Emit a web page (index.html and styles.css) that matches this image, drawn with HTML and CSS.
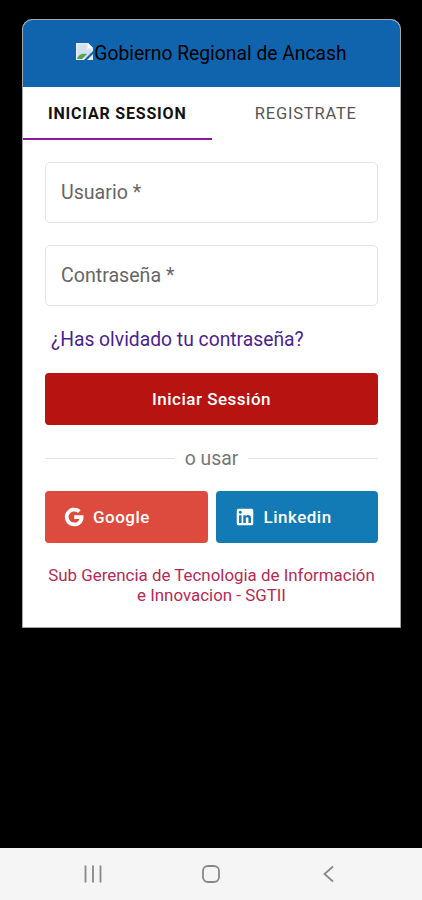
FILE: index.html
```html
<!DOCTYPE html>
<html lang="es">
<head>
    <meta charset="UTF-8">
    <meta name="viewport" content="width=device-width, initial-scale=1.0">
    <title>Gobierno Regional de Ancash</title>
    <link rel="stylesheet" href="styles.css">
</head>
<body>

    <main>
        <div class="card">
            <header class="card-header">
                <svg class="logo" viewBox="0 0 18 18">
                    <path d="M0 0h12l5 5v12H0z" fill="#e4ebf4"/>
                    <path d="M1.500 1.500h9v5h5v4l-5 5h-9z" fill="#d3e0f2"/>
                    <path d="M1 16c1-4 5-6 10-5l-5 5z" fill="#57a447"/>
                    <path d="M12 0v5h5z" fill="#fff"/>
                    <path d="M17 8v3l-6 6H8z" fill="#1064ae"/>
                </svg>
                <span class="logo-text">Gobierno Regional de Ancash</span>
            </header>

            <nav class="tabs">
                <a class="tab active">INICIAR SESSION</a>
                <a class="tab">REGISTRATE</a>
            </nav>

            <form class="login-form">
                <label class="field">Usuario *</label>
                <label class="field">Contraseña *</label>

                <a class="forgot">¿Has olvidado tu contraseña?</a>

                <button type="button" class="btn btn-login">Iniciar Sessión</button>

                <div class="divider"><span>o usar</span></div>

                <div class="social">
                    <button type="button" class="btn btn-google">
                        <svg class="icon" viewBox="0 0 24 24"><path fill="#fff" d="M12.200 10.100v4h5.600c-.6 2.400-2.500 4-5.600 4a6.100 6.100 0 1 1 4.100-10.600l2.900-2.900A10.200 10.200 0 1 0 12.200 22.200c6.200 0 10.200-4.200 10.200-10.200 0-.7-.1-1.300-.2-1.900z"/></svg>
                        <span>Google</span>
                    </button>
                    <button type="button" class="btn btn-linkedin">
                        <svg class="icon" viewBox="0 0 24 24"><path fill="#fff" d="M19 3a2 2 0 0 1 2 2v14a2 2 0 0 1-2 2H5a2 2 0 0 1-2-2V5a2 2 0 0 1 2-2h14m-.5 15.500v-5.300a3.260 3.260 0 0 0-3.260-3.260c-.85 0-1.840.52-2.320 1.300v-1.110h-2.790v8.370h2.790v-4.930c0-.77.620-1.400 1.390-1.400a1.400 1.400 0 0 1 1.400 1.400v4.930h2.790M6.880 8.560a1.680 1.680 0 0 0 1.680-1.680c0-.93-.75-1.690-1.680-1.690a1.690 1.690 0 0 0-1.690 1.690c0 .93.760 1.680 1.690 1.680m1.390 9.940v-8.370H5.500v8.370h2.770z"/></svg>
                        <span>Linkedin</span>
                    </button>
                </div>

                <p class="credits">Sub Gerencia de Tecnologia de Información<br>e Innovacion - SGTII</p>
            </form>
        </div>
    </main>

    <footer class="navbar">
        <svg viewBox="0 0 20 20"><path d="M2.500 1.500v17M10 1.500v17M17.500 1.500v17"/></svg>
        <svg viewBox="0 0 20 20"><rect x="2" y="2" width="16" height="16" rx="5"/></svg>
        <svg viewBox="0 0 20 20"><path d="M14 2.500L5.500 10l8.500 7.500"/></svg>
    </footer>

</body>
</html>
```
FILE: styles.css
```css
/* General Styles */
* {
    box-sizing: border-box;
}
body {
    font-family: Roboto, "Liberation Sans", sans-serif;
    background-color: #000;
    color: #000;
    margin: 0;
    height: 900px;
    display: flex;
    flex-direction: column;
    overflow: hidden;
}
main {
    flex: 1;
    padding: 19px 21px 0 22px;
}
.card {
    height: 609px;
    background: #fff;
    border: 1px solid #a3a7aa;
    border-radius: 10px 10px 0 0;
    overflow: hidden;
}

/* Header */
.card-header {
    height: 67px;
    background: #1064ae;
    display: flex;
    justify-content: center;
    align-items: center;
}
.logo {
    width: 18px;
    height: 18px;
    margin-top: -3px;
}
.logo-text {
    font-size: 19.3px;
}

/* Tabs */
.tabs {
    display: flex;
    height: 53px;
}
.tab {
    flex: 1;
    display: flex;
    justify-content: center;
    align-items: center;
    padding-top: 1px;
    border-bottom: 2px solid transparent;
    font-size: 16.5px;
    letter-spacing: 0.8px;
    color: #555;
}
.tab.active {
    color: #111;
    font-size: 16px;
    font-weight: 700;
    border-bottom-color: #8a1a9b;
}

/* Form */
.login-form {
    padding: 22px 22px 0;
}
.field {
    display: flex;
    align-items: center;
    height: 61px;
    border: 1px solid #e3e3e3;
    border-radius: 5px;
    padding-left: 15px;
    margin-bottom: 22px;
    font-size: 19.6px;
    color: #666;
}
.forgot {
    display: block;
    padding-left: 6px;
    font-size: 19.3px;
    line-height: 24px;
    color: #4b1f91;
}
.btn {
    display: flex;
    align-items: center;
    height: 52px;
    border: none;
    border-radius: 4px;
    color: #fff;
    font-family: inherit;
    font-size: 17px;
    font-weight: 500;
    letter-spacing: 0.5px;
}
.btn-login {
    width: 100%;
    justify-content: center;
    margin-top: 21px;
    background: #b71310;
}
.divider {
    display: flex;
    align-items: center;
    gap: 10px;
    height: 24px;
    margin: 21px 0;
    font-size: 19.4px;
    color: #777;
}
.divider::before,
.divider::after {
    content: "";
    flex: 1;
    height: 1px;
    background: #e3e3e3;
}
.social {
    display: grid;
    grid-template-columns: 1fr 1fr;
    gap: 8px;
}
.social .btn {
    padding: 0 18px;
    gap: 8px;
}
.icon {
    width: 22px;
    height: 22px;
}
.btn-google {
    background: #dc4b3e;
}
.btn-linkedin {
    background: #127bb6;
}
.credits {
    margin: 22px -10px 0;
    text-align: center;
    font-size: 16.9px;
    line-height: 20px;
    color: #b52a55;
}

/* Bottom bar */
.navbar {
    height: 52px;
    background: #f5f5f5;
    display: flex;
    justify-content: center;
    gap: 98px;
    align-items: center;
}
.navbar svg {
    width: 20px;
    height: 20px;
    fill: none;
    stroke: #888;
    stroke-width: 1.8;
}
```
